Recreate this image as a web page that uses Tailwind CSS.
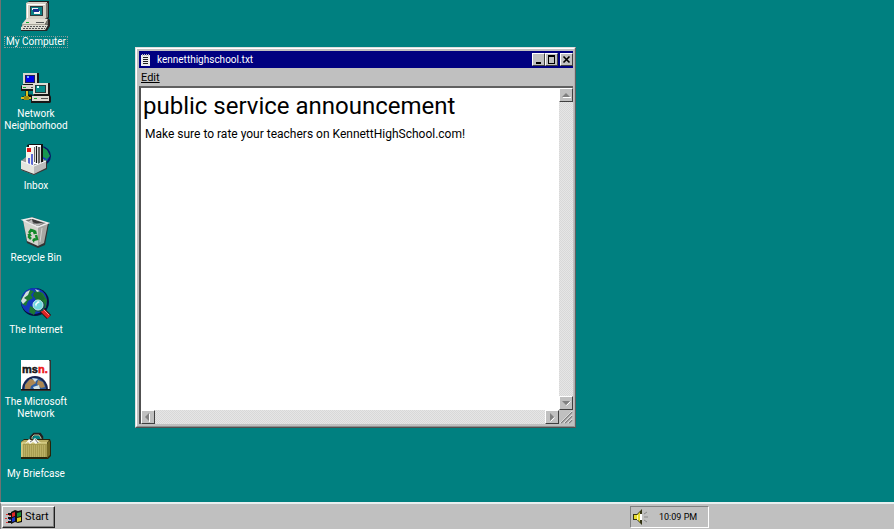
<!DOCTYPE html>
<html lang="en">
<head>
<meta charset="utf-8">
<meta name="viewport" content="width=device-width, initial-scale=1">
<title>Desktop</title>
<script src="https://cdn.jsdelivr.net/npm/@tailwindcss/browser@4"></script>
</head>
<body class="font-[Roboto,'Liberation_Sans',Arial,sans-serif] text-black">
<div class="relative flex h-screen flex-col overflow-hidden bg-[#008080]">
  <!-- Desktop icons -->
  <main class="flex min-h-0 flex-1 border-l border-[#6f7272]">
    <nav aria-label="Desktop" class="flex w-[70px] flex-col text-[10px] leading-3 text-white">
      <button class="flex h-18 shrink-0 flex-col items-center gap-1">
        <svg class="size-8 shrink-0" viewBox="0 0 32 32" aria-hidden="true">
          <path d="M7 3 9 1h20v17l-3 3H7z" fill="#202020"/><path d="M6 3 8 2h19v15l-2 2H6z" fill="#d4d0c4"/>
          <path d="M26 3h2v14l-2 2z" fill="#77756e"/><path d="M7 4h18v1H8v13H7z" fill="#fff"/>
          <path d="M10 6h13v10H10z" fill="#30383a"/><path d="M11 7h11v8H11z" fill="#087f83"/>
          <path d="M12 8h6v2h-6zM14 11h6v3h-6z" fill="#f4f4f4"/><path d="M13 9h6v3h-6z" fill="#183090"/><path d="M15 12h4v1h-4z" fill="#fff"/>
          <path d="M6 19h23l1 1v6l-3 5H1v-4z" fill="#252525"/><path d="M6 19h22l-3 5H2z" fill="#e4e0d6"/><path d="M28 19v5l-3 4v-4z" fill="#77756e"/>
          <path d="M2 24h23v2H2z" fill="#aaa69a"/><path d="M1 27 4 25h24l-3 5H1z" fill="#dedcd3"/>
          <path d="M4 26.500h22M3 28.500h22" stroke="#555" stroke-dasharray="2 1"/><path d="M6 22h3v1H6z" fill="#12a52d"/><path d="M16 22h8v1h-8z" fill="#555"/>
        </svg>
        <span class="border border-dotted border-[#8a9a9a] px-px leading-[10px] whitespace-nowrap">My Computer</span>
      </button>
      <button class="flex h-18 shrink-0 flex-col items-center gap-1">
        <svg class="size-8 shrink-0" viewBox="0 0 32 32" aria-hidden="true">
          <path d="M7 18v6h4v3M2 26h17" fill="none" stroke="#111" stroke-width="3"/><path d="M7 18v7M1 26h17" fill="none" stroke="#d9c020" stroke-width="2"/><path d="M4 24h5v4H4z" fill="#9a8b10"/>
          <path d="M3 1h16v12l2 1v5H1v-5l3-2z" fill="#171717"/><path d="M3 1h14v11H3zM2 13h16v4H2z" fill="#d9d6cc"/><path d="M5 3h10v8H5z" fill="#202050"/><path d="M6 4h8v6H6z" fill="#0000e8"/><path d="M7 4h2v2H7z" fill="#79a8ff"/><path d="M3 15h3v1H3z" fill="#13a52c"/><path d="M11 15h6v1h-6z" fill="#555"/>
          <path d="M13 11h17v12l1 2v5l-1 1H11v-6l3-2z" fill="#171717"/><path d="M13 11h15v11H13zM12 24h17v5H12z" fill="#dedbd2"/><path d="M15 13h11v8H15z" fill="#263b3b"/><path d="M16 14h9v6h-9z" fill="#078d8b"/><path d="M17 14h2v2h-2z" fill="#dff"/><path d="M14 26h3v1h-3z" fill="#13a52c"/><path d="M21 26h7v1h-7z" fill="#555"/>
        </svg>
        <span>Network<br>Neighborhood</span>
      </button>
      <button class="flex h-18 shrink-0 flex-col items-center gap-1">
        <svg class="size-8 shrink-0" viewBox="0 0 32 32" aria-hidden="true">
          <circle cx="21" cy="12" r="10" fill="#071c65"/><circle cx="20" cy="12" r="9" fill="#153bc1"/><path d="m21 2 6 4 3 6-3 3-4-2-1-5zM22 17l5-2-2 6z" fill="#179650"/><path d="m20 4 3 1-1 4z" fill="#d8e5e5"/>
          <path d="m1 17 5-4h15l6 5v6l-13 7L1 26z" fill="#999"/>
          <path d="m7 1 3-1h13v19H10z" fill="#111"/><path d="M9 1h12v19H9z" fill="#fff"/><path d="M14 3v15M16.500 2v17M19 3v17M21.500 3v17" stroke="#151515" stroke-width="1.3"/><path d="M6 3h8v18H6z" fill="#f5f5ee"/><path d="M7 4h4v4H7z" fill="#df1717"/><path d="M12 10v11M9 14v7" stroke="#2637cc" stroke-width="1.5"/>
          <path d="m1 17 13 5 13-5v8l-13 6L1 26z" fill="#353535"/><path d="m1 17 13 5v8L1 25z" fill="#e5e5df"/><path d="m14 22 12-5v7l-12 6z" fill="#bbb"/><path d="m1 17 13 5 12-5" stroke="#fff" fill="none"/>
        </svg>
        <span>Inbox</span>
      </button>
      <button class="flex h-18 shrink-0 flex-col items-center gap-1">
        <svg class="size-8 shrink-0" viewBox="0 0 32 32" aria-hidden="true">
          <path d="m3 4 9-3 17 6-4 22-7 3-11-5z" fill="#333"/><path d="m3 4 15 7v19L7 25z" fill="#d4d4ce"/><path d="m18 11 10-4-4 20-6 3z" fill="#a7a7a3"/><path d="m4 4 8-2 15 5-9 3z" fill="#777"/><path d="m9 4 4-1 10 4-4 2z" fill="#393939"/><path d="m3 4 9-2 16 5-10 4z" fill="none" stroke="#eee" stroke-width="1.5"/><path d="m12 3 1 5 10-1-5 3L8 6z" fill="#bcbcbc"/>
          <path d="m9 17 2-3 3 1 1 3M16 19l1 4-4 1M11 23l-2-2 1-3" fill="none" stroke="#138b2b" stroke-width="2.5"/><path d="m13 17 4 1-1-4zM15 22l-3 2 2 3zM7 19l3-2 2 3z" fill="#118529"/><path d="m22 12-2 14" stroke="#d4d4d0"/>
        </svg>
        <span class="whitespace-nowrap">Recycle Bin</span>
      </button>
      <button class="flex h-18 shrink-0 flex-col items-center gap-1">
        <svg class="size-8 shrink-0" viewBox="0 0 32 32" aria-hidden="true">
          <circle cx="15" cy="14" r="14" fill="#07113f"/><circle cx="14" cy="13" r="13" fill="#1337bd"/><path d="m4 7 5-5 5 1-3 4 2 3-5 3-2 5-4-2-1-5zM15 2l8 3 4 7-1 8-5-1-2-5-4-3 2-4zM10 18l7 3-3 6-5-3z" fill="#1d7a32"/><path d="m3 9 3-5 4-2-2 5-4 3 3 2-4 4-2-3zM15 1l5 2-3 1z" fill="#d1dfdf"/><path d="m14 4 7 1 4 6-4 2-5-2-3-3z" fill="#176b2d"/>
          <path d="m22 22 7 7" stroke="#301010" stroke-width="6"/><path d="m22 22 7 7" stroke="#dc2525" stroke-width="4"/><path d="m23 21 6 6" stroke="#ff9090"/><circle cx="19" cy="18" r="6" fill="#164e54"/><circle cx="18" cy="17" r="5" fill="#70d7dc" stroke="#c6eeee"/><path d="m15 16 3-3 2 1-3 2-1 3z" fill="#f3ffff"/>
        </svg>
        <span class="whitespace-nowrap">The Internet</span>
      </button>
      <button class="flex h-18 shrink-0 flex-col items-center gap-1">
        <svg class="size-8 shrink-0" viewBox="0 0 32 32" aria-hidden="true">
          <path d="M1 0h30v31H1z" fill="#333"/><path d="M1 0h28v30H1z" fill="#fff"/><path d="M29 1h1v29h-1z" fill="#999"/>
          <text x="2" y="13" font-family="Liberation Sans, sans-serif" font-size="11" font-weight="700" fill="#151515" stroke="#151515" stroke-width=".5">ms<tspan fill="#ed1717" stroke="#ed1717">n.</tspan></text>
          <path d="M2 30a13 14 0 0 1 26 0z" fill="#162451"/><path d="M4 30a11 12 0 0 1 22 0z" fill="#2c5d9e"/><path d="m5 25 5-6 5 1 1 3-5 3-1 4H5zM18 20l5 2 2 5-4 1-4-4z" fill="#ab8753"/><path d="m12 18 6 1-3 3zM13 27l6-2 1 4h-6z" fill="#d2e1e4"/><path d="M1 29h29v1H1z" fill="#111"/>
        </svg>
        <span class="whitespace-nowrap">The Microsoft<br>Network</span>
      </button>
      <button class="flex h-18 shrink-0 flex-col items-center gap-1">
        <svg class="size-8 shrink-0" viewBox="0 0 32 32" aria-hidden="true">
          <path d="M11 10V5l3-3h6l2 3v5" fill="none" stroke="#202020" stroke-width="2.5"/><path d="M12 9V5l2-2h5l2 3v3" fill="none" stroke="#bdb994"/>
          <path d="m1 10 3-3h26l1 3v14l-3 3H1z" fill="#28240a"/><path d="m1 10 3-2h25l-2 3v14H1z" fill="#b8ad61"/><path d="M2 11h25v14H2z" fill="#a69c50"/><path d="m29 8 1 2v13l-3 3V12z" fill="#716824"/><path d="M2 11h25M2 11v14" stroke="#eee5a0"/>
          <path d="M4 14h22M4 16h22M4 18h22M4 20h22M4 22h22M4 24h22" stroke="#d0c57a" stroke-dasharray="1 1"/><path d="m5 12 4-5 3 2 3-3 6 5-3-1-2 2-3-2-3 2-2-2z" fill="#f8f8f3"/><path d="m10 10 3-2M15 7l3 4" stroke="#777"/>
        </svg>
        <span class="whitespace-nowrap">My Briefcase</span>
      </button>
    </nav>
  </main>

  <!-- Text document window -->
  <section aria-label="kennetthighschool.txt" class="absolute top-[47px] left-[135px] flex h-[381px] w-[441px] flex-col border border-t-[#dfdfdf] border-r-[#606060] border-b-[#505050] border-l-[#dfdfdf] bg-[#c0c0c0]">
    <div class="flex min-h-0 flex-1 flex-col border border-t-white border-r-[#b0b0b0] border-b-[#909090] border-l-white py-0.5 pr-px pl-0.5">
      <header class="flex h-[17px] shrink-0 items-center bg-[#000080] pl-0.5 text-white">
        <svg class="mr-1.5 h-3 w-2.5 shrink-0" viewBox="0 0 10 12" aria-hidden="true"><path d="M0 1h9v11H0z" fill="#eee"/><path d="M1 0h1v2H1zM3 0h1v2H3zM5 0h1v2H5zM7 0h1v2H7z" fill="#bbb"/><path d="M2 3h5v1H2zM2 5h5v1H2zM2 7h5v1H2zM2 9h5v1H2z" fill="#222"/></svg>
        <h1 class="flex-1 text-[10px] leading-3">kennetthighschool.txt</h1>
        <div class="flex">
          <button aria-label="Minimize" class="size-[13px] border border-t-white border-r-[#404040] border-b-[#404040] border-l-white bg-[#c0c0c0]"><svg viewBox="0 0 11 11" aria-hidden="true"><path d="M3 8h5v2H3z"/></svg></button>
          <button aria-label="Maximize" class="size-[13px] border border-t-white border-r-[#404040] border-b-[#404040] border-l-white bg-[#c0c0c0]"><svg viewBox="0 0 11 11" aria-hidden="true"><path d="M2 1h7v9H2zm1 2v6h5V3z" fill-rule="evenodd"/></svg></button>
          <button aria-label="Close" class="ml-0.5 size-[13px] border border-t-white border-r-[#404040] border-b-[#404040] border-l-white bg-[#c0c0c0]"><svg viewBox="0 0 11 11" aria-hidden="true"><path d="m2.500 2.500 6 6m0-6-6 6" stroke="#000" stroke-width="1.6"/></svg></button>
        </div>
      </header>
      <div class="flex h-[18px] shrink-0 items-center pt-0.5 pl-0.5"><button class="text-[11px] leading-3 underline">Edit</button></div>
      <div class="grid min-h-0 flex-1 grid-cols-[1fr_14px] grid-rows-[1fr_14px] border-t-2 border-l-2 border-t-[#606060] border-l-[#505050]">
        <article class="overflow-hidden bg-white px-0.5 pt-0.5">
          <h2 class="text-2xl leading-8">public service announcement</h2>
          <p class="pt-1 pl-0.5 text-xs leading-4">Make sure to rate your teachers on KennettHighSchool.com!</p>
        </article>
        <div class="flex flex-col justify-between bg-[repeating-conic-gradient(#d8d8d8_0_25%,#e6e6e6_0_50%)] bg-size-[2px_2px]">
          <button aria-label="Scroll up" class="size-3.5 border border-t-white border-r-[#404040] border-b-[#404040] border-l-white bg-[#c0c0c0]"><svg viewBox="0 0 12 12" aria-hidden="true"><path d="m2 8 4-4 4 4z" fill="#808080"/><path d="M3 8.500h8" stroke="#fff"/></svg></button>
          <button aria-label="Scroll down" class="size-3.5 border border-t-white border-r-[#404040] border-b-[#404040] border-l-white bg-[#c0c0c0]"><svg viewBox="0 0 12 12" aria-hidden="true"><path d="m2 4 4 4 4-4z" fill="#808080"/><path d="m6.500 8.500 4-4" stroke="#fff"/></svg></button>
        </div>
        <div class="flex justify-between bg-[repeating-conic-gradient(#d8d8d8_0_25%,#e6e6e6_0_50%)] bg-size-[2px_2px]">
          <button aria-label="Scroll left" class="size-3.5 border border-t-white border-r-[#404040] border-b-[#404040] border-l-white bg-[#c0c0c0]"><svg viewBox="0 0 12 12" aria-hidden="true"><path d="M7 2 3 6l4 4z" fill="#808080"/><path d="M7.500 3v8" stroke="#fff"/></svg></button>
          <button aria-label="Scroll right" class="size-3.5 border border-t-white border-r-[#404040] border-b-[#404040] border-l-white bg-[#c0c0c0]"><svg viewBox="0 0 12 12" aria-hidden="true"><path d="m4 2 4 4-4 4z" fill="#808080"/><path d="m4.500 10.500 4-4" stroke="#fff"/></svg></button>
        </div>
        <svg class="size-3.5" viewBox="0 0 14 14" aria-hidden="true"><path d="M2 13 13 2M6 13l7-7M10 13l3-3" stroke="#808080" stroke-width="1.5"/><path d="M1 13 13 1M5 13l8-8M9 13l4-4" stroke="#f4f4f4" stroke-width=".7"/></svg>
      </div>
    </div>
  </section>

  <!-- Taskbar -->
  <footer class="flex h-[27px] shrink-0 items-center justify-between border-t-2 border-t-[#e8f0f0] border-l border-l-[#808080] bg-[#c0c0c0] pt-0.5 pb-px pl-px">
    <button class="flex h-[22px] w-[53px] items-center gap-0.5 border border-t-white border-r-[#202020] border-b-[#202020] border-l-white pl-0.5 text-[11px] leading-4 shadow-[inset_-1px_-1px_#808080]">
      <svg class="h-4 w-[18px] shrink-0" viewBox="0 0 18 16" aria-hidden="true"><path d="m6 3 4-2 3 1 4-1v12l-4 1-3-1-4 2z" fill="#111"/><path d="m7 4 3-1v4L7 8z" fill="#e12727"/><path d="m12 4 4-1v4l-4 1z" fill="#178b35"/><path d="m7 9 3-1v4l-3 1z" fill="#1839d0"/><path d="m12 9 4-1v4l-4 1z" fill="#e3cf22"/><path d="M3 4h3v2H3zM3 8h3v2H3zM3 12h3v2H3z" fill="#111"/><path d="M1 5h2v1H1zM1 13h2v1H1z" fill="#d92c2c"/><path d="M4 6h2v1H4zM0 9h2v1H0z" fill="#d92c2c"/><path d="M4 10h2v1H4z" fill="#1839d0"/></svg>
      <span>Start</span>
    </button>
    <div class="mr-[185px] flex h-[22px] w-[79px] items-center gap-2.5 border border-t-[#808080] border-r-white border-b-white border-l-[#808080] pl-0.5">
      <svg class="size-4 shrink-0" viewBox="0 0 16 16" aria-hidden="true"><path d="M0 5h4l5-5v16l-5-5H0z" fill="#343414"/><path d="M1 6h3l3-3v10l-3-3H1z" fill="#e6db2f"/><path d="M4 6h1v5H4z" fill="#fff9a6"/><path d="M7 5h2v6H7z" fill="#fff"/><path d="m11 5 3-2M11 8h4M11 11l3 2" stroke="#888"/></svg>
      <time class="text-[9px] leading-3">10:09 PM</time>
    </div>
  </footer>
</div>
</body>
</html>
